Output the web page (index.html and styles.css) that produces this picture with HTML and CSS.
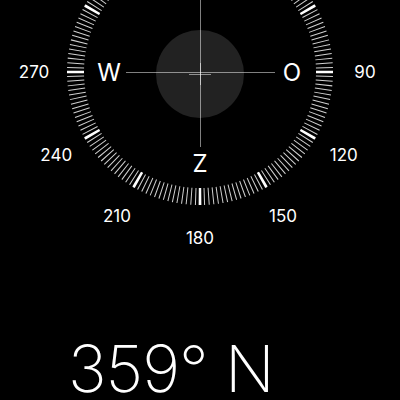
FILE: index.html
```html
<!DOCTYPE html>
<html lang="nl">
<head>
<meta charset="utf-8">
<title>Kompas</title>
<link rel="stylesheet" href="styles.css">
</head>
<body>
<main class="screen">
  <svg class="compass" width="400" height="250" viewBox="-200 -72 400 250" xmlns="http://www.w3.org/2000/svg">
    <circle class="ring-minor" cx="0" cy="0" r="124.5" pathLength="360"/>
    <circle class="ring-major" cx="0" cy="0" r="124.5" pathLength="360"/>

    <circle class="level-disc" cx="0" cy="2" r="44"/>

    <rect class="hair" x="-74" y="0" width="149" height="1"/>
    <rect class="hair" x="0" y="-72" width="1" height="147"/>
    <rect class="hair" x="-11" y="2" width="22" height="1"/>
    <rect class="hair" x="0" y="-9" width="1" height="22"/>

    <text class="dir" x="-91" y="8.5">W</text>
    <text class="dir" x="92" y="8.5">O</text>
    <text class="dir" x="0" y="99.5">Z</text>

    <text class="num" x="-166" y="6.2">270</text>
    <text class="num" x="-143.8" y="89.2">240</text>
    <text class="num" x="-83" y="150">210</text>
    <text class="num" x="0" y="172.2">180</text>
    <text class="num" x="83" y="150">150</text>
    <text class="num" x="143.8" y="89.2">120</text>
    <text class="num" x="165" y="6.2">90</text>
  </svg>
  <p class="reading">359° N</p>
</main>
</body>
</html>
```

FILE: styles.css
```css
html, body {
  margin: 0;
  padding: 0;
  background: #000;
}

.screen {
  width: 400px;
  height: 400px;
  overflow: hidden;
  background: #000;
  display: flex;
  flex-direction: column;
}

.compass {
  display: block;
  flex: none;
}

.ring-minor {
  fill: none;
  stroke: #d0d0d0;
  stroke-width: 17;
  stroke-dasharray: 0.46 1.54;
  stroke-dashoffset: 0.23;
}

.ring-major {
  fill: none;
  stroke: #fff;
  stroke-width: 17;
  stroke-dasharray: 1.2 28.8;
  stroke-dashoffset: 0.6;
}

.level-disc {
  fill: #222;
}

.hair {
  fill: rgba(255, 255, 255, 0.5);
}

.dir {
  font-family: Inter, "Liberation Sans", sans-serif;
  font-weight: 400;
  font-size: 24px;
  fill: #fff;
  text-anchor: middle;
}

.num {
  font-family: Inter, "Liberation Sans", sans-serif;
  font-weight: 400;
  font-size: 17px;
  fill: #fff;
  text-anchor: middle;
}

.reading {
  margin: 0;
  padding-top: 91px;
  padding-left: 68px;
  font-family: Inter, "Liberation Sans", sans-serif;
  font-weight: 200;
  font-size: 65px;
  line-height: 56px;
  letter-spacing: -1px;
  color: #fff;
  white-space: nowrap;
}
```
